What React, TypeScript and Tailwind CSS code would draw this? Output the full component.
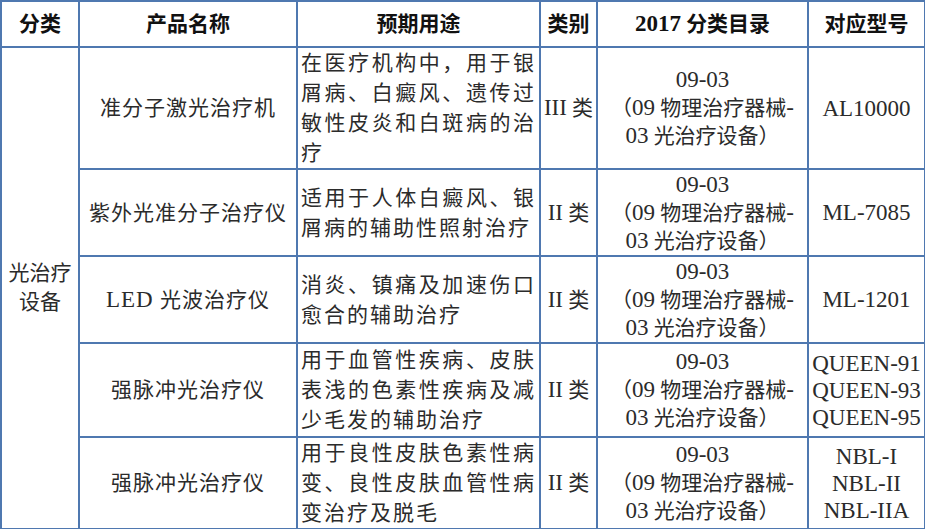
// 光治疗设备产品分类表
import type { ReactNode } from "react";

// 拉丁字符比中文略大一号
const L = ({ children }: { children: ReactNode }) => (
  <span className="text-[23px]">{children}</span>
);

const rows = [
  {
    name: <>准分子激光治疗机</>,
    use: "在医疗机构中，用于银屑病、白癜风、遗传过敏性皮炎和白斑病的治疗",
    cls: "III",
    models: ["AL10000"],
    h: "h-[122px]",
  },
  {
    name: <>紫外光准分子治疗仪</>,
    use: "适用于人体白癜风、银屑病的辅助性照射治疗",
    cls: "II",
    models: ["ML-7085"],
    h: "h-[87px]",
  },
  {
    name: (
      <>
        <L>LED</L> 光波治疗仪
      </>
    ),
    use: "消炎、镇痛及加速伤口愈合的辅助治疗",
    cls: "II",
    models: ["ML-1201"],
    h: "h-[87px]",
  },
  {
    name: <>强脉冲光治疗仪</>,
    use: "用于血管性疾病、皮肤表浅的色素性疾病及减少毛发的辅助治疗",
    cls: "II",
    models: ["QUEEN-91", "QUEEN-93", "QUEEN-95"],
    h: "h-[94px]",
  },
  {
    name: <>强脉冲光治疗仪</>,
    use: "用于良性皮肤色素性病变、良性皮肤血管性病变治疗及脱毛",
    cls: "II",
    models: ["NBL-I", "NBL-II", "NBL-IIA"],
    h: "h-[90px]",
  },
];

const cell = "border-2 border-[#4f78b0] align-middle p-0";

export default function App() {
  return (
    <div className="w-[925px] h-[529px] bg-white overflow-hidden font-['Liberation_Serif','Noto_Sans_CJK_SC',serif] text-[#2b2b2b]">
      <table className="table-fixed border-collapse w-[924px]">
        <colgroup>
          <col className="w-[78px]" />
          <col className="w-[218px]" />
          <col className="w-[243px]" />
          <col className="w-[57px]" />
          <col className="w-[211px]" />
          <col className="w-[117px]" />
        </colgroup>
        <thead>
          <tr className="h-[46px] text-[21px] leading-[28px] font-bold text-[#111]">
            <th className={`${cell} text-center`}>分类</th>
            <th className={`${cell} text-center`}>产品名称</th>
            <th className={`${cell} text-center`}>预期用途</th>
            <th className={`${cell} text-center`}>类别</th>
            <th className={`${cell} text-center`}>
              <L>2017</L> 分类目录
            </th>
            <th className={`${cell} text-center`}>对应型号</th>
          </tr>
        </thead>
        <tbody className="text-[21px] leading-[30px]">
          {rows.map((r, i) => (
            <tr key={i} className={r.h}>
              {i === 0 && (
                <td rowSpan={5} className={`${cell} text-center px-1 leading-[29px]`}>
                  光治疗
                  <br />
                  设备
                </td>
              )}
              <td className={`${cell} text-center tracking-[1px]`}>{r.name}</td>
              <td className={`${cell} px-[3px] text-justify tracking-[2px]`}>{r.use}</td>
              <td className={`${cell} text-center whitespace-nowrap`}>
                <L>{r.cls}</L> 类
              </td>
              <td className={`${cell} text-center leading-[27px]`}>
                <L>09-03</L>
                <br />
                （<L>09</L> 物理治疗器械<L>-</L>
                <br />
                <L>03</L> 光治疗设备）
              </td>
              <td className={`${cell} text-center text-[23px] leading-[27px] whitespace-nowrap`}>
                {r.models.map((m) => (
                  <div key={m}>{m}</div>
                ))}
              </td>
            </tr>
          ))}
        </tbody>
      </table>
    </div>
  );
}
